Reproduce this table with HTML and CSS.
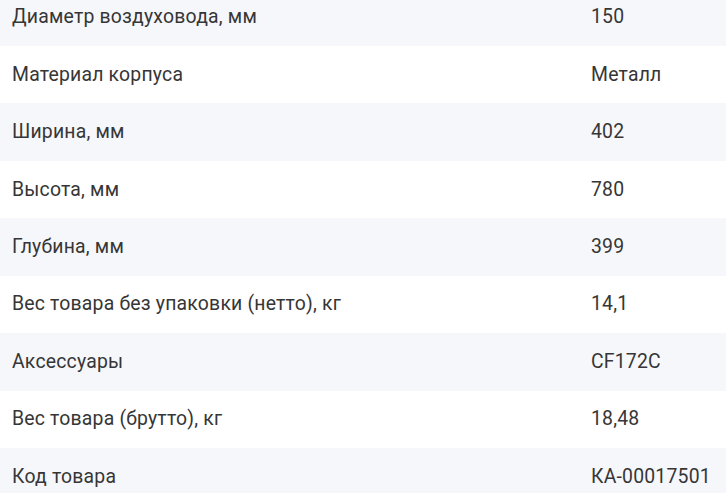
FILE: index.html
```html
<!DOCTYPE html>
<html lang="ru">
<head>
<meta charset="utf-8">
<link rel="stylesheet" href="styles.css">
</head>
<body>
<div class="specs">
  <div class="row"><div class="name">Диаметр воздуховода, мм</div><div class="value">150</div></div>
  <div class="row"><div class="name">Материал корпуса</div><div class="value">Металл</div></div>
  <div class="row"><div class="name">Ширина, мм</div><div class="value">402</div></div>
  <div class="row"><div class="name">Высота, мм</div><div class="value">780</div></div>
  <div class="row"><div class="name">Глубина, мм</div><div class="value">399</div></div>
  <div class="row"><div class="name">Вес товара без упаковки (нетто), кг</div><div class="value">14,1</div></div>
  <div class="row"><div class="name">Аксессуары</div><div class="value">CF172C</div></div>
  <div class="row"><div class="name">Вес товара (брутто), кг</div><div class="value">18,48</div></div>
  <div class="row"><div class="name">Код товара</div><div class="value">КА-00017501</div></div>
</div>
</body>
</html>
```
FILE: styles.css
```css
html, body {
  margin: 0;
  padding: 0;
  background: #ffffff;
}
body {
  font-family: Roboto, "Noto Sans", sans-serif;
  font-size: 19.4px;
  letter-spacing: 0.2px;
  color: #363636;
  overflow: hidden;
}
.specs {
  display: flex;
  flex-direction: column;
  margin-top: -11.4px;
}
.row {
  display: grid;
  grid-template-columns: 579px 1fr;
  align-items: center;
  height: 57.43px;
}
.row:nth-child(odd) {
  background: #f6f7fb;
}
.name, .value {
  padding-left: 12px;
  line-height: 24px;
  white-space: nowrap;
}
```
